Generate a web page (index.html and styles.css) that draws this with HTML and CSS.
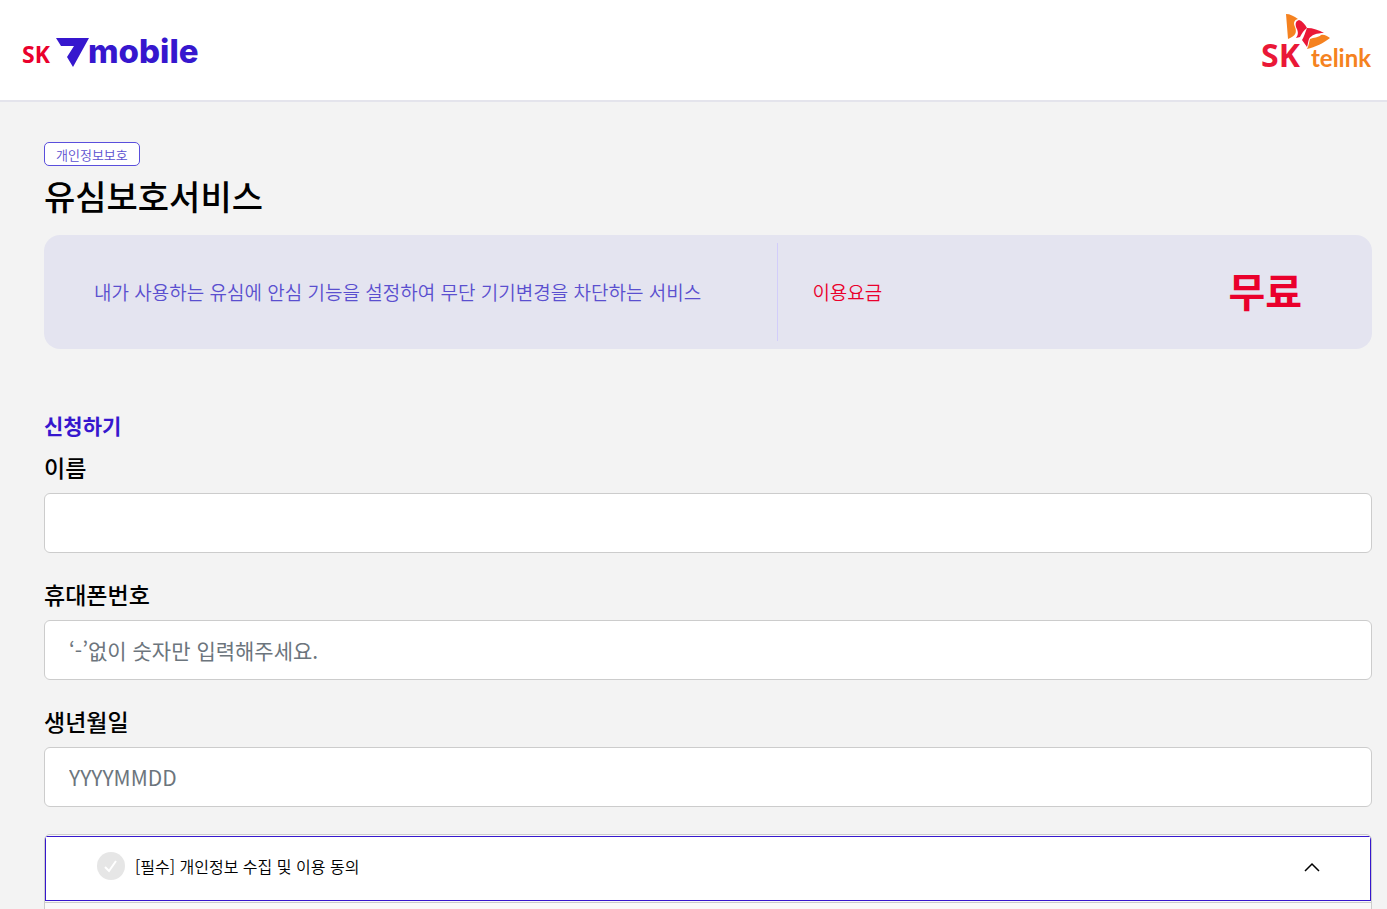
FILE: index.html
```
<!DOCTYPE html>
<html lang="ko">
<head>
    <meta charset="UTF-8">
    <meta name="viewport" content="width=device-width, initial-scale=1.0">
    <title>유심보호서비스 | SK 7mobile</title>
    <link rel="stylesheet" href="styles.css">
</head>
<body>

<!-- 헤더 -->
<header class="header">
    <a href="#" class="logo">
        <svg width="190" height="48" viewBox="0 0 190 48" role="img" aria-label="SK 7mobile">
            <text class="logo-sk" x="0" y="35">SK</text>
            <path d="M34 10H67L51 39L45 29L52 18H39Z" fill="#3617ce"/>
            <text class="logo-mobile" x="66" y="35">mobile</text>
        </svg>
    </a>
    <a href="#" class="logo">
        <svg width="113" height="72" viewBox="0 0 113 72" role="img" aria-label="SK telink">
            <path d="M26 2C30 2 34 4 38 7C34 8 33 11 35 15C37 20 36 24 28 27Z" fill="#f58220"/>
            <path d="M39 8C42 9 45 12 47 16C44 18 42 21 40 25L36 26C39 22 38 19 36 15C35 11 36 9 39 8Z" fill="#ea1837"/>
            <path d="M47 16C53 16 59 18 64 21C57 21 51 23 49 27C48 30 48 32 47 35L42 28C44 25 45 21 47 16Z" fill="#ea1837"/>
            <path d="M61 23C64 22 67 24 70 26C64 31 55 35 47 37C49 33 49 30 50 27C54 25 58 26 61 23Z" fill="#f58220"/>
            <text class="logo-sk-big" x="1" y="55">SK</text>
            <text class="logo-telink" x="51" y="55">telink</text>
        </svg>
    </a>
</header>

<main class="container">
    <!-- 서비스 소개 -->
    <span class="badge">개인정보보호</span>
    <h1 class="title">유심보호서비스</h1>
    <section class="service-box">
        <p class="service-desc">내가 사용하는 유심에 안심 기능을 설정하여 무단 기기변경을 차단하는 서비스</p>
        <div class="service-price">
            <span>이용요금</span>
            <strong>무료</strong>
        </div>
    </section>

    <!-- 신청 폼 -->
    <form class="apply-form">
        <h2 class="form-title">신청하기</h2>
        <div class="form-group">
            <label for="userName">이름</label>
            <input type="text" id="userName">
        </div>
        <div class="form-group">
            <label for="userPhone">휴대폰번호</label>
            <input type="tel" id="userPhone" placeholder="‘-’없이 숫자만 입력해주세요.">
        </div>
        <div class="form-group">
            <label for="userBirth">생년월일</label>
            <input type="text" id="userBirth" placeholder="YYYYMMDD">
        </div>

        <!-- 약관 동의 -->
        <div class="agree">
            <div class="agree-head">
                <input type="checkbox" id="agreePrivacy" class="agree-check">
                <label for="agreePrivacy">[필수] 개인정보 수집 및 이용 동의</label>
                <button type="button" class="agree-toggle" aria-label="접기">
                    <svg width="16" height="10" viewBox="0 0 16 10">
                        <path d="M1 9L8 2L15 9" fill="none" stroke="#000" stroke-width="1.5"/>
                    </svg>
                </button>
            </div>
            <div class="agree-body"></div>
        </div>
    </form>
</main>

</body>
</html>
```
FILE: styles.css
```
/* 기본 */
* {
    box-sizing: border-box;
}

body {
    margin: 0;
    background-color: #f3f3f3;
    color: #000;
    font-family: 'Noto Sans CJK KR', sans-serif;
    font-size: 16px;
}

/* 스크롤바 숨김 */
body::-webkit-scrollbar {
    display: none;
}

h1, h2, p {
    margin: 0;
}

/* 헤더 */
.header {
    display: flex;
    justify-content: space-between;
    align-items: flex-start;
    min-height: 102px;
    padding: 12px 14px 0 22px;
    background-color: #fff;
    border-bottom: 2px solid #e4e4ec;
}

.logo svg {
    display: block;
}

.logo:first-child {
    padding-top: 16px;
}

.logo-sk,
.logo-sk-big {
    font-family: 'Noto Sans', sans-serif;
    font-weight: 700;
    fill: #ea002c;
    font-size: 23px;
}

.logo-sk-big {
    font-size: 32px;
    fill: #ea1837;
}

.logo-mobile {
    font-family: Inter, sans-serif;
    font-weight: 800;
    font-size: 33px;
    fill: #3617ce;
}

.logo-telink {
    font-family: Lato, sans-serif;
    font-weight: 700;
    font-size: 24px;
    fill: #f58220;
}

/* 본문 */
.container {
    padding: 40px 15px 0 44px;
}

.badge {
    display: block;
    width: fit-content;
    padding: 2px 11px 0;
    border: 1px solid #5a4fdc;
    border-radius: 5px;
    background-color: #fff;
    color: #5a4fcf;
    font-size: 13px;
    font-weight: 350;
    line-height: 20px;
}

.title {
    margin-top: 6px;
    font-size: 34px;
    font-weight: 500;
    line-height: 48px;
}

.service-box {
    display: flex;
    margin-top: 15px;
    padding: 8px 0;
    border-radius: 16px;
    background-color: #e4e4f0;
    font-size: 19px;
    font-weight: 350;
    line-height: 98px;
}

.service-desc {
    flex: 0 0 55.3%;
    padding-left: 50px;
    border-right: 1px solid #d2cdfa;
    color: #5a4fcf;
}

.service-price {
    flex: 1;
    display: flex;
    justify-content: space-between;
    padding: 0 70px 0 34px;
    color: #ea002c;
}

.service-price strong {
    font-size: 40px;
    font-weight: 700;
    line-height: 94px;
}

/* 폼 */
.apply-form {
    margin-top: 58px;
}

.form-title {
    margin-bottom: 4px;
    color: #3617ce;
    font-size: 21px;
    font-weight: 700;
    line-height: 36px;
}

.form-group {
    margin-bottom: 21px;
}

.form-group label {
    display: block;
    padding: 5px 0 11px;
    font-size: 23px;
    font-weight: 500;
    line-height: 30px;
}

.form-group input {
    display: block;
    width: 100%;
    height: 60px;
    padding: 0 24px;
    border: 1px solid #ccc;
    border-radius: 6px;
    background-color: #fff;
    font-family: inherit;
    font-size: 21px;
}

.form-group input::placeholder {
    color: #6c757d;
}

/* 약관 동의 */
.agree {
    margin-top: 27px;
    padding-top: 1px;
    border: 1px solid #ccc;
    border-radius: 6px;
    background-color: #f9f9f9;
    overflow: hidden;
}

.agree-head {
    display: flex;
    align-items: center;
    gap: 10px;
    height: 65px;
    padding: 0 50px 6px 51px;
    border: 1px solid #3617ce;
    background-color: #fff;
    font-weight: 350;
}

.agree-check {
    appearance: none;
    width: 28px;
    height: 28px;
    margin: 0;
    border-radius: 50%;
    background: #e6e6e6 url("data:image/svg+xml,%3Csvg xmlns='http://www.w3.org/2000/svg' viewBox='0 0 28 28'%3E%3Cpath d='M8 15L12 19L19 9' fill='none' stroke='%23fff' stroke-width='2'/%3E%3C/svg%3E");
}

.agree-toggle {
    margin-left: auto;
    padding: 4px 0 0;
    border: 0;
    background: none;
}

.agree-body {
    height: 60px;
    margin-top: 1px;
    border-top: 1px solid #ccc;
}
```
